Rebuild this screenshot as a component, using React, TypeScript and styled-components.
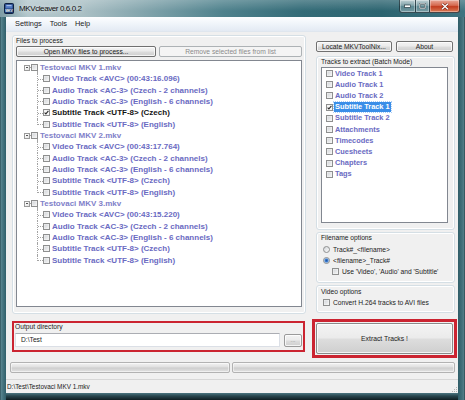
import styled, { createGlobalStyle } from 'styled-components';

const ui = `"Liberation Sans", Arial, sans-serif`;

const GlobalStyle = createGlobalStyle`
  html, body {
    margin: 0;
    padding: 0;
    background: #2e5a65;
  }
  * {
    box-sizing: border-box;
  }
`;

const Window = styled.div`
  width: 465px;
  height: 400px;
  display: flex;
  flex-direction: column;
  overflow: hidden;
  font-family: ${ui};
  font-size: 6.7px;
  color: #1b1b1b;
`;

const TitleBar = styled.div`
  height: 17px;
  flex: none;
  display: flex;
  align-items: flex-start;
  background:
    linear-gradient(180deg, rgba(255, 255, 255, 0.22) 0%, rgba(255, 255, 255, 0) 65%),
    linear-gradient(
      90deg,
      #7d9ca5 0%,
      #b3c7cc 6%,
      #a9bfc4 18%,
      #7fa2aa 32%,
      #4e818c 48%,
      #336b77 65%,
      #2c6470 82%,
      #3e7380 100%
    );
`;

const AppIcon = styled.svg`
  margin: 3px 0 0 4px;
  flex: none;
`;

const Title = styled.span`
  padding-left: 5px;
  line-height: 17px;
  font-size: 8px;
  letter-spacing: -0.4px;
  color: #101010;
  text-shadow: 0 0 5px rgba(255, 255, 255, 0.9);
`;

const Caption = styled.div`
  display: flex;
  margin: 0 5px 0 auto;
  height: 13px;
`;

const CapBtn = styled.div<{ $w: number; $close?: boolean; $first?: boolean }>`
  width: ${(p) => p.$w}px;
  height: 13px;
  display: flex;
  align-items: center;
  justify-content: center;
  border: 1px solid rgba(18, 38, 46, 0.75);
  border-top: none;
  border-left: ${(p) => (p.$first ? '1px solid rgba(18, 38, 46, 0.75)' : 'none')};
  border-radius: ${(p) => (p.$first ? '0 0 0 3px' : p.$close ? '0 0 3px 0' : '0')};
  box-shadow: inset 0 0 0 1px rgba(255, 255, 255, 0.35);
  background: ${(p) =>
    p.$close
      ? 'linear-gradient(180deg, #e9a899 0%, #d5694f 45%, #c23c1f 55%, #d97a55 100%)'
      : 'linear-gradient(180deg, rgba(255,255,255,0.6) 0%, rgba(255,255,255,0.3) 45%, rgba(255,255,255,0.12) 55%, rgba(255,255,255,0.35) 100%)'};
`;

const Frame = styled.div`
  flex: 1;
  display: flex;
  flex-direction: column;
  padding: 0 7px 7px 6px;
  background:
    linear-gradient(90deg, #1f3e47 0, #5a8791 1px, #46747f 3px, #30606b 6px) left top / 6px 100% no-repeat,
    linear-gradient(270deg, #19333b 0, #557f89 1px, #42707b 3px, #2f5d68 7px) right top / 7px 100% no-repeat,
    linear-gradient(180deg, #4b7580 0, #27454d 3px, #0f1d21 7px) left bottom / 100% 7px no-repeat,
    #2f5d68;
`;

const MenuBar = styled.div`
  height: 15px;
  flex: none;
  display: flex;
  align-items: center;
  padding-left: 5px;
  background: linear-gradient(180deg, #fdfeff 0%, #eef3f9 55%, #e3eaf3 100%);
  border-bottom: 1px solid #dfe6ee;
`;

const MenuItem = styled.span`
  padding: 0 4px;
  font-size: 7.4px;
  line-height: 14px;
`;

const Client = styled.div`
  flex: 1;
  display: flex;
  flex-direction: column;
  background: #f0f0f0;
`;

const Main = styled.div`
  height: 326px;
  flex: none;
  display: flex;
  gap: 6px;
  padding: 0 1px 0 6px;
`;

const LeftCol = styled.div`
  width: 294px;
  display: flex;
  flex-direction: column;
  padding-top: 3px;
`;

const RightCol = styled.div`
  width: 145px;
  display: flex;
  flex-direction: column;
  padding-top: 9px;
`;

const Group = styled.div<{ $h: number; $top?: number }>`
  height: ${(p) => p.$h}px;
  margin: ${(p) => p.$top ?? 0}px 2px 0 4px;
  border: 1px solid #d5dfe5;
  border-radius: 3px;
  box-shadow: inset 0 0 0 1px #ffffff;
  padding: 0 6px 0 4px;
  display: flex;
  flex-direction: column;
`;

const FilesGroup = styled(Group)`
  margin: 0;
  padding: 0 3px;
`;

const GroupLabel = styled.div<{ $pad?: number }>`
  height: 9px;
  line-height: 9px;
  padding-top: ${(p) => p.$pad ?? 0}px;
  box-sizing: content-box;
  white-space: nowrap;
`;

const ButtonRow = styled.div<{ $pad?: number }>`
  display: flex;
  gap: ${(p) => (p.$pad ? 4 : 3)}px;
  margin-top: ${(p) => (p.$pad ? 0 : 1)}px;
  padding-left: ${(p) => p.$pad ?? 0}px;
`;

const Button = styled.button<{ $w: number; $h?: number }>`
  width: ${(p) => p.$w}px;
  height: ${(p) => p.$h ?? 11}px;
  padding: 0;
  border: 1px solid #707070;
  border-radius: 2px;
  background: linear-gradient(180deg, #f3f3f3 0%, #ebebeb 48%, #dddddd 52%, #cfcfcf 100%);
  box-shadow: inset 0 0 0 1px rgba(255, 255, 255, 0.75);
  font-family: ${ui};
  font-size: 6.7px;
  color: #1b1b1b;
  white-space: nowrap;

  &:disabled {
    border-color: #adb2b5;
    background: #f4f4f4;
    box-shadow: none;
    color: #8b8b8b;
  }
`;

const ExtractButton = styled(Button)`
  width: 100%;
  height: 100%;
  border-color: #8a8a8a;
  font-size: 6.8px;
`;

const DotsButton = styled(Button)`
  color: #8a8a8a;
  border-color: #9a9a9a;
  font-size: 6px;
`;

const Tree = styled.div`
  margin-top: 3px;
  width: 286px;
  height: 247px;
  background: #ffffff;
  border: 1px solid #828790;
  padding-top: 1px;
  overflow: hidden;
`;

const TreeRow = styled.div<{ $indent: number }>`
  position: relative;
  height: 11.33px;
  display: flex;
  align-items: center;
  padding-left: ${(p) => p.$indent}px;

  &.parent::after {
    content: '';
    position: absolute;
    left: 20px;
    top: 9px;
    bottom: 0;
    border-left: 1px dotted #a3a3a3;
  }
`;

const ExpandBox = styled.span`
  position: relative;
  width: 6px;
  height: 6px;
  flex: none;
  border: 1px solid #9a9a9a;
  background: linear-gradient(135deg, #ffffff, #e3e3e3);

  &::after {
    content: '';
    position: absolute;
    left: 1px;
    right: 1px;
    top: 1.5px;
    height: 1px;
    background: #555;
  }
`;

const HLine = styled.span<{ $w: number }>`
  width: ${(p) => p.$w}px;
  flex: none;
  border-top: 1px dotted #a3a3a3;
`;

const Connector = styled.span<{ $last?: boolean }>`
  position: relative;
  width: 6px;
  flex: none;
  align-self: flex-start;
  height: ${(p) => (p.$last ? '6px' : '11.33px')};
  border-left: 1px dotted #a3a3a3;

  &::after {
    content: '';
    position: absolute;
    left: 0;
    right: 0;
    top: 5.5px;
    border-top: 1px dotted #a3a3a3;
  }
`;

const Box = styled.span<{ $checked?: boolean }>`
  width: 7px;
  height: 7px;
  flex: none;
  display: flex;
  align-items: center;
  justify-content: center;
  border: 1px solid #8e8f8f;
  background: ${(p) =>
    p.$checked ? 'linear-gradient(135deg, #f4f4f4, #ffffff)' : 'linear-gradient(135deg, #cfd2d6, #f7f7f7)'};
  box-shadow: inset 0 0 0 0.5px #f4f4f4;
`;

const TreeLabel = styled.span<{ $tone: 'file' | 'track' | 'on' }>`
  margin-left: 2px;
  font-size: 8px;
  font-weight: bold;
  line-height: 11px;
  white-space: nowrap;
  color: ${(p) => (p.$tone === 'file' ? '#8080c9' : p.$tone === 'on' ? '#141414' : '#6a6ac2')};
`;

const OutputBox = styled.div`
  margin-top: 7px;
  width: 293px;
  height: 31px;
  border: 2px solid #cb2431;
  padding: 0 1px;
  display: flex;
  flex-direction: column;
`;

const OutLabel = styled.div`
  height: 8px;
  line-height: 8px;
`;

const OutRow = styled.div`
  margin-top: 2px;
  display: flex;
  align-items: center;
  gap: 4px;
`;

const TextInput = styled.div`
  width: 265px;
  height: 14px;
  background: #ffffff;
  border: 1px solid #dbdfe6;
  border-top-color: #abadb3;
  padding-left: 5px;
  line-height: 12px;
`;

const List = styled.div`
  margin-top: 1px;
  width: 127px;
  height: 156px;
  background: #ffffff;
  border: 1px solid #828790;
  overflow: hidden;
`;

const ListRow = styled.div`
  height: 11.2px;
  display: flex;
  align-items: center;
  padding-left: 4px;
  gap: 1px;
`;

const ListLabel = styled.span<{ $sel?: boolean }>`
  padding: 0 1px;
  height: 10px;
  line-height: 10px;
  font-size: 7.4px;
  font-weight: bold;
  white-space: nowrap;
  color: ${(p) => (p.$sel ? '#ffffff' : '#6a6ac2')};
  background: ${(p) => (p.$sel ? '#3a8ee8' : 'transparent')};
  outline: ${(p) => (p.$sel ? '1px dotted #a9cdf7' : 'none')};
`;

const OptionRow = styled.div<{ $indent?: number; $top?: number }>`
  height: 11px;
  display: flex;
  align-items: center;
  gap: 3px;
  margin-top: ${(p) => p.$top ?? 0}px;
  padding-left: ${(p) => p.$indent ?? 2}px;
  white-space: nowrap;
`;

const Radio = styled.span<{ $on?: boolean }>`
  width: 7px;
  height: 7px;
  flex: none;
  border-radius: 50%;
  border: 1px solid #8e8f8f;
  background: ${(p) =>
    p.$on
      ? 'radial-gradient(circle, #1f55a3 0, #3f7fd0 1.4px, #b9d2f2 2.4px, #f3f6fb 3px)'
      : 'linear-gradient(135deg, #d3d6da, #fbfbfb)'};
`;

const ExtractBox = styled.div`
  margin-top: 6px;
  width: 145px;
  height: 39px;
  border: 3px solid #cb2431;
  padding: 1px;
`;

const ProgressRow = styled.div`
  margin-top: 4px;
  height: 11px;
  flex: none;
  display: flex;
  gap: 2px;
  padding: 0 3px 0 4px;
`;

const Progress = styled.div<{ $w?: number }>`
  width: ${(p) => (p.$w ? `${p.$w}px` : 'auto')};
  flex: ${(p) => (p.$w ? 'none' : 1)};
  height: 11px;
  border: 1px solid #b2b2b2;
  border-radius: 2px;
  background: linear-gradient(180deg, #f3f3f3 0%, #dedede 48%, #cdcdcd 52%, #e2e2e2 100%);
  box-shadow: inset 0 0 0 1px rgba(255, 255, 255, 0.5);
`;

const StatusBar = styled.div`
  margin-top: 6px;
  height: 14px;
  flex: none;
  display: flex;
  align-items: center;
  border-top: 1px solid #d7d7d7;
  padding-left: 1px;
  font-size: 6.4px;
`;

const Grip = styled.svg`
  margin-left: auto;
  align-self: flex-end;
`;

const Check = ({ on }: { on?: boolean }) => (
  <Box $checked={on}>
    {on && (
      <svg width="5" height="5" viewBox="0 0 5 5">
        <path d="M0.6 2.6 L1.9 3.9 L4.4 0.9" fill="none" stroke="#2b2b2b" strokeWidth="1.1" />
      </svg>
    )}
  </Box>
);

type Track = { label: string; on?: boolean };

const mkTracks = (time: string, czechOn = false): Track[] => [
  { label: `Video Track <AVC> (${time})` },
  { label: 'Audio Track <AC-3> (Czech - 2 channels)' },
  { label: 'Audio Track <AC-3> (English - 6 channels)' },
  { label: 'Subtitle Track <UTF-8> (Czech)', on: czechOn },
  { label: 'Subtitle Track <UTF-8> (English)' },
];

const files = [
  { name: 'Testovaci MKV 1.mkv', tracks: mkTracks('00:43:16.096', true) },
  { name: 'Testovaci MKV 2.mkv', tracks: mkTracks('00:43:17.764') },
  { name: 'Testovaci MKV 3.mkv', tracks: mkTracks('00:43:15.220') },
];

const batchTracks = [
  'Video Track 1',
  'Audio Track 1',
  'Audio Track 2',
  'Subtitle Track 1',
  'Subtitle Track 2',
  'Attachments',
  'Timecodes',
  'Cuesheets',
  'Chapters',
  'Tags',
];

export default function App() {
  return (
    <>
      <GlobalStyle />
      <Window>
        <TitleBar>
          <AppIcon width="10" height="11" viewBox="0 0 10 11">
            <rect x="0.5" y="0.5" width="9" height="10" rx="1" fill="#1c3b73" stroke="#0d1f40" />
            <rect x="1.5" y="1.5" width="7" height="4" fill="#4f79c2" />
            <rect x="2.5" y="2.3" width="5" height="0.8" fill="#c9d8f2" />
            <text x="5" y="9.3" fontSize="3.4" fontFamily="Liberation Sans" fontWeight="bold" fill="#ffffff" textAnchor="middle">
              MKV
            </text>
          </AppIcon>
          <Title>MKVcleaver 0.6.0.2</Title>
          <Caption>
            <CapBtn $w={17} $first>
              <svg width="7" height="4" viewBox="0 0 7 4">
                <rect x="0.5" y="1" width="6" height="2.4" fill="#ffffff" stroke="#2a3d44" strokeWidth="0.7" />
              </svg>
            </CapBtn>
            <CapBtn $w={14}>
              <svg width="7" height="6" viewBox="0 0 7 6">
                <rect x="0.8" y="0.8" width="5.4" height="4.4" fill="none" stroke="#2a3d44" strokeWidth="1.6" />
                <rect x="0.8" y="0.8" width="5.4" height="4.4" fill="none" stroke="#ffffff" strokeWidth="0.8" />
              </svg>
            </CapBtn>
            <CapBtn $w={30} $close>
              <svg width="8" height="7" viewBox="0 0 8 7">
                <path d="M1 0.8 L7 6.2 M7 0.8 L1 6.2" stroke="#6a1c10" strokeWidth="2.4" />
                <path d="M1 0.8 L7 6.2 M7 0.8 L1 6.2" stroke="#ffffff" strokeWidth="1.4" />
              </svg>
            </CapBtn>
          </Caption>
        </TitleBar>

        <Frame>
          <MenuBar>
            <MenuItem>Settings</MenuItem>
            <MenuItem>Tools</MenuItem>
            <MenuItem>Help</MenuItem>
          </MenuBar>

          <Client>
            <Main>
              <LeftCol>
                <FilesGroup $h={279}>
                  <GroupLabel>Files to process</GroupLabel>
                  <ButtonRow>
                    <Button $w={140}>Open MKV files to process...</Button>
                    <Button $w={143} disabled>
                      Remove selected files from list
                    </Button>
                  </ButtonRow>
                  <Tree>
                    {files.map((file) => (
                      <div key={file.name}>
                        <TreeRow $indent={7} className="parent">
                          <ExpandBox />
                          <HLine $w={1} />
                          <Check />
                          <TreeLabel $tone="file">{file.name}</TreeLabel>
                        </TreeRow>
                        {file.tracks.map((t, i) => (
                          <TreeRow $indent={20} key={t.label}>
                            <Connector $last={i === file.tracks.length - 1} />
                            <Check on={t.on} />
                            <TreeLabel $tone={t.on ? 'on' : 'track'}>{t.label}</TreeLabel>
                          </TreeRow>
                        ))}
                      </div>
                    ))}
                  </Tree>
                </FilesGroup>

                <OutputBox>
                  <OutLabel>Output directory</OutLabel>
                  <OutRow>
                    <TextInput>D:\Test</TextInput>
                    <DotsButton $w={18} $h={13}>
                      ...
                    </DotsButton>
                  </OutRow>
                </OutputBox>
              </LeftCol>

              <RightCol>
                <ButtonRow $pad={4}>
                  <Button $w={76}>Locate MKVToolNix...</Button>
                  <Button $w={57}>About</Button>
                </ButtonRow>

                <Group $h={174} $top={4}>
                  <GroupLabel>Tracks to extract (Batch Mode)</GroupLabel>
                  <List>
                    {batchTracks.map((name) => (
                      <ListRow key={name}>
                        <Check on={name === 'Subtitle Track 1'} />
                        <ListLabel $sel={name === 'Subtitle Track 1'}>{name}</ListLabel>
                      </ListRow>
                    ))}
                  </List>
                </Group>

                <Group $h={51} $top={2}>
                  <GroupLabel>Filename options</GroupLabel>
                  <OptionRow $top={2}>
                    <Radio />
                    <span>Track#_&lt;filename&gt;</span>
                  </OptionRow>
                  <OptionRow>
                    <Radio $on />
                    <span>&lt;filename&gt;_Track#</span>
                  </OptionRow>
                  <OptionRow $indent={11}>
                    <Check />
                    <span>Use 'Video', 'Audio' and 'Subtitle'</span>
                  </OptionRow>
                </Group>

                <Group $h={28} $top={2}>
                  <GroupLabel $pad={1}>Video options</GroupLabel>
                  <OptionRow $top={1}>
                    <Check />
                    <span>Convert H.264 tracks to AVI files</span>
                  </OptionRow>
                </Group>

                <ExtractBox>
                  <ExtractButton $w={137}>Extract Tracks !</ExtractButton>
                </ExtractBox>
              </RightCol>
            </Main>

            <ProgressRow>
              <Progress $w={220} />
              <Progress />
            </ProgressRow>

            <StatusBar>
              <span>D:\Test\Testovaci MKV 1.mkv</span>
              <Grip width="8" height="8" viewBox="0 0 8 8">
                <g fill="#b5b5b5">
                  <rect x="6" y="2" width="1" height="1" />
                  <rect x="4" y="4" width="1" height="1" />
                  <rect x="6" y="4" width="1" height="1" />
                  <rect x="2" y="6" width="1" height="1" />
                  <rect x="4" y="6" width="1" height="1" />
                  <rect x="6" y="6" width="1" height="1" />
                </g>
              </Grip>
            </StatusBar>
          </Client>
        </Frame>
      </Window>
    </>
  );
}
